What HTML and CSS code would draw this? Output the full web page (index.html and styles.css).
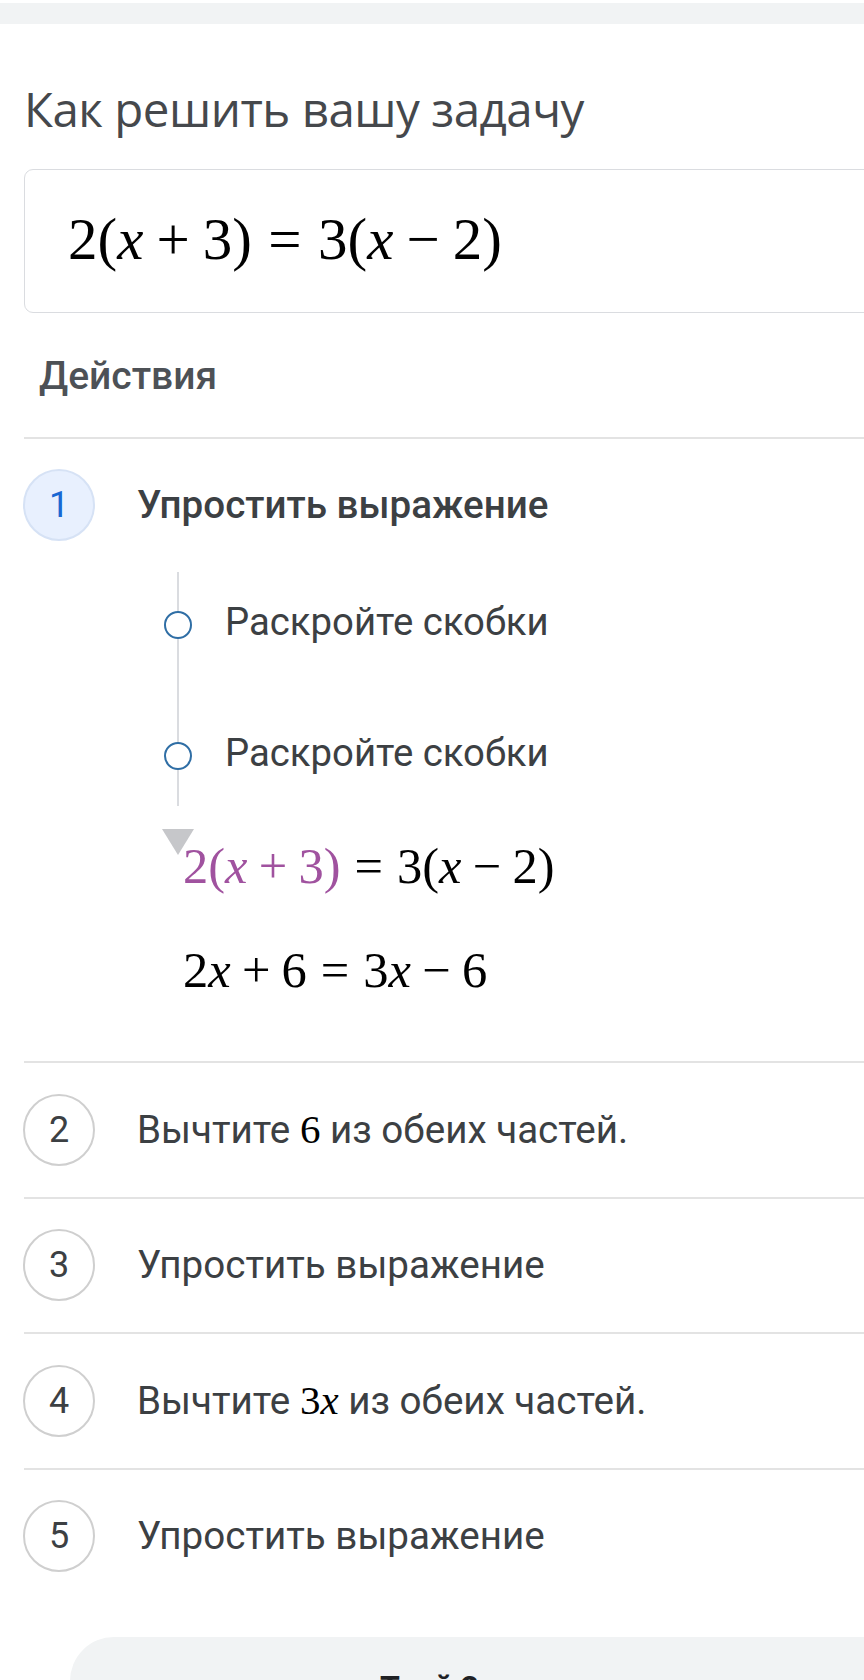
FILE: index.html
```html
<!DOCTYPE html>
<html lang="ru">
  <head>
    <meta charset="utf-8" />
    <meta name="viewport" content="width=device-width, initial-scale=1" />
    <title>Как решить вашу задачу</title>
    <link rel="stylesheet" href="styles.css">
  </head>
  <body>
    <div class="topbar"></div>
    <main class="solution">
      <h1 class="solution-title">Как решить вашу задачу</h1>

      <div class="problem">
        <span class="math">2(<i>x</i><span class="bin">+</span>3)<span class="rel">=</span>3(<i>x</i><span class="bin">−</span>2)</span>
      </div>

      <h2 class="actions-title">Действия</h2>

      <ol class="steps">
        <li class="step step-open">
          <div class="step-head">
            <span class="step-num">1</span>
            <span class="step-label">Упростить выражение</span>
          </div>
          <div class="substeps">
            <div class="substep">
              <span class="substep-dot"></span>
              <span class="substep-label">Раскройте скобки</span>
            </div>
            <div class="substep">
              <span class="substep-dot"></span>
              <span class="substep-label">Раскройте скобки</span>
            </div>
          </div>
          <div class="work">
            <span class="caret"></span>
            <div class="math work-line"><span class="hl">2(<i>x</i><span class="bin">+</span>3)</span><span class="rel">=</span>3(<i>x</i><span class="bin">−</span>2)</div>
            <div class="math work-line work-line-next">2<i>x</i><span class="bin">+</span>6<span class="rel">=</span>3<i>x</i><span class="bin">−</span>6</div>
          </div>
        </li>
        <li class="step">
          <div class="step-head">
            <span class="step-num">2</span>
            <span class="step-label">Вычтите <span class="math-inline">6</span> из обеих частей.</span>
          </div>
        </li>
        <li class="step">
          <div class="step-head">
            <span class="step-num">3</span>
            <span class="step-label">Упростить выражение</span>
          </div>
        </li>
        <li class="step">
          <div class="step-head">
            <span class="step-num">4</span>
            <span class="step-label">Вычтите <span class="math-inline">3<i>x</i></span> из обеих частей.</span>
          </div>
        </li>
        <li class="step">
          <div class="step-head">
            <span class="step-num">5</span>
            <span class="step-label">Упростить выражение</span>
          </div>
        </li>
      </ol>

      <div class="sheet">Твой 2</div>
    </main>
  </body>
</html>
```

FILE: styles.css
```css
body {
  margin: 0;
  padding: 0;
  width: 100%;
  overflow: hidden;
  background: #fff;
  font-family: Roboto, "Noto Sans", sans-serif;
  color: #3c4043;
}

.topbar {
  margin-top: 3px;
  height: 21px;
  background: #f1f3f4;
}

.solution {
  padding-left: 24px;
}

.solution-title {
  margin: 55px 0 0;
  font-family: "Open Sans", "Noto Sans", sans-serif;
  font-size: 47.5px;
  font-weight: 400;
  line-height: 60px;
  color: #45484c;
  letter-spacing: -0.5px;
}

.problem {
  box-sizing: border-box;
  margin: 30px -20px 0 0;
  height: 144px;
  padding: 35px 0 0 43px;
  border: 1px solid #dadce0;
  border-radius: 9px;
}

.math,
.math-inline {
  font-family: "Liberation Serif", "Times New Roman", serif;
  color: #000;
  white-space: nowrap;
}

.math i,
.math-inline i {
  font-style: italic;
}

.problem .math {
  font-size: 59px;
  line-height: 68px;
}

.bin {
  margin: 0 0.222em;
}

.rel {
  margin: 0 0.278em;
}

.actions-title {
  margin: 39px 0 0;
  padding: 0 0 37px 15px;
  font-size: 39px;
  font-weight: 500;
  line-height: 48px;
  color: #4d5156;
}

.steps {
  list-style: none;
  margin: 0;
  padding: 0;
}

.step {
  border-top: 2px solid #e3e3e3;
  padding: 30px 0 31px;
}

.step-head {
  display: flex;
  align-items: center;
  gap: 42px;
}

.step-num {
  box-sizing: border-box;
  flex: none;
  width: 72px;
  height: 72px;
  margin-left: -1px;
  border: 2px solid #cfcfcf;
  border-radius: 50%;
  text-align: center;
  font-size: 36px;
  line-height: 68px;
  color: #3c4043;
}

.step-open .step-num {
  background: #e8f0fe;
  border-color: #d6e2f5;
  color: #1967d2;
}

.step-label {
  font-size: 38.6px;
  line-height: 72px;
  color: #3c4043;
}

.step-open .step-label {
  font-weight: 500;
}

.math-inline {
  font-size: 41px;
}

.substeps {
  margin: 31px 0 0 153px;
  padding: 20px 0 23px;
  border-left: 2px solid #dadce0;
}

.substep {
  display: flex;
  align-items: flex-start;
  gap: 33px;
}

.substep + .substep {
  margin-top: 71px;
}

.substep-dot {
  box-sizing: border-box;
  flex: none;
  width: 28px;
  height: 28px;
  margin: 19px 0 0 -15px;
  border: 2.5px solid #2f6ea5;
  border-radius: 50%;
  background: #fff;
}

.substep-label {
  font-size: 38.3px;
  line-height: 60px;
  color: #3c4043;
}

.work {
  position: relative;
  margin: 30px 0 0 159px;
  padding-bottom: 30px;
}

.caret {
  position: absolute;
  left: -21px;
  top: -7px;
  width: 0;
  height: 0;
  border-left: 16px solid transparent;
  border-right: 16px solid transparent;
  border-top: 26px solid #c6c7ca;
}

.work-line {
  font-size: 50.5px;
  line-height: 60px;
}

.work-line-next {
  margin-top: 44px;
}

.hl {
  color: #a0529f;
}

.sheet {
  margin: 34px -40px 0 46px;
  padding: 26px 0 40px 310px;
  border-radius: 44px 0 0 0;
  background: #f1f3f4;
  font-size: 32px;
  font-weight: 700;
  line-height: 48px;
  color: #202124;
}
```
